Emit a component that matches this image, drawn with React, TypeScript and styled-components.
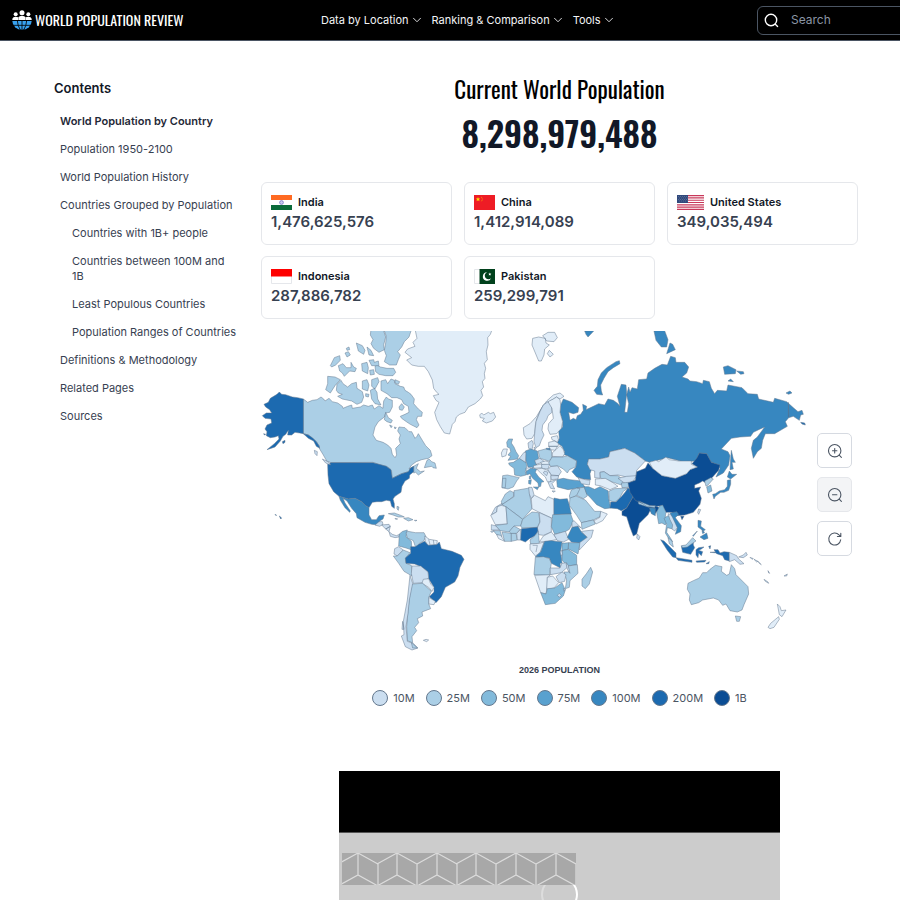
import React from "react";
import styled, { createGlobalStyle } from "styled-components";
import { ChevronDown } from "lucide-react";

const condensed = `"Oswald", "Liberation Sans Narrow", "Roboto Condensed", "Open Sans Condensed", "Liberation Sans", sans-serif`;

const GlobalStyle = createGlobalStyle`
  *, *::before, *::after { box-sizing: border-box; }
  body {
    margin: 0;
    background: #fff;
    color: #111827;
    font-family: Inter, "Liberation Sans", sans-serif;
    font-size: 11px;
    overflow-x: hidden;
  }
  h1, h2, p, ul, ol, figure { margin: 0; padding: 0; }
  ul, ol { list-style: none; }
  a { color: inherit; text-decoration: none; }
  button { font: inherit; cursor: pointer; }
`;

const Header = styled.header`
  display: grid;
  grid-template-columns: 309px 1fr 143px;
  align-items: center;
  height: 41px;
  padding-left: 12px;
  background: #000;
  border-bottom: 1px solid #4b5563;
  overflow: hidden;
`;

const Brand = styled.a`
  display: flex;
  align-items: center;
  gap: 3px;
  color: #fff;
  font: 400 14px/20px ${condensed};
  white-space: nowrap;
`;

const Nav = styled.nav`
  display: flex;
  gap: 8px;
`;

const NavButton = styled.button`
  display: flex;
  align-items: center;
  gap: 1px;
  padding: 0;
  border: 0;
  background: none;
  color: #f3f4f6;
  font-size: 11px;
  font-weight: 400;
  line-height: 16px;
  white-space: nowrap;
`;

const SearchBox = styled.label`
  display: flex;
  align-items: center;
  gap: 12px;
  width: 176px;
  height: 29px;
  padding-left: 6px;
  border: 1px solid #4b5563;
  border-radius: 6px;
`;

const SearchInput = styled.input`
  flex: 1;
  min-width: 0;
  padding: 0;
  border: 0;
  outline: 0;
  background: none;
  color: #fff;
  font: 400 12px/16px Inter, sans-serif;
  &::placeholder { color: #8b95a5; opacity: 1; }
`;

const Page = styled.div`
  display: grid;
  grid-template-columns: 184px minmax(0, 1fr);
  gap: 23px;
  padding: 37px 42px 0 54px;
`;

const Contents = styled.nav`
  padding-top: 1px;
`;

const ContentsTitle = styled.h2`
  margin-bottom: 17px;
  font-size: 13px;
  font-weight: 600;
  line-height: 18px;
`;

const ContentsList = styled.ul<{ $nested?: boolean }>`
  display: grid;
  gap: 13px;
  margin-top: ${(p) => (p.$nested ? "13px" : "0")};
  padding-left: ${(p) => (p.$nested ? "12px" : "6px")};
  line-height: 15px;
  color: #374151;
`;

const ContentsLink = styled.a<{ $active?: boolean }>`
  display: block;
  font-weight: ${(p) => (p.$active ? 600 : 400)};
  color: ${(p) => (p.$active ? "#1f2937" : "#374151")};
`;

const Main = styled.main`
  min-width: 0;
`;

const Title = styled.h1`
  color: #000;
  font: 400 23px/22px ${condensed};
  text-align: center;
`;

const Total = styled.p`
  margin-top: 8px;
  color: #111827;
  font: 600 34px/50px ${condensed};
  text-align: center;
`;

const Cards = styled.ul`
  display: grid;
  grid-template-columns: repeat(3, 1fr);
  gap: 11px 12px;
  margin-top: 24px;
`;

const Card = styled.li`
  height: 63px;
  padding: 11px 9px;
  border: 1px solid #e5e7eb;
  border-radius: 6px;
`;

const CardName = styled.a`
  display: flex;
  align-items: center;
  gap: 6px;
  height: 16px;
  font-weight: 600;
  svg { display: block; }
`;

const CardValue = styled.p`
  margin-top: 2px;
  color: #374151;
  font-size: 15px;
  font-weight: 600;
  line-height: 20px;
`;

const MapFrame = styled.figure`
  position: relative;
  margin-top: 12px;
`;

const MapSvg = styled.svg`
  display: block;
  width: 100%;
  height: auto;
  overflow: hidden;
  path {
    stroke: #64788e;
    stroke-width: 1.5;
    stroke-linejoin: round;
  }
`;

const MapControls = styled.div`
  position: absolute;
  top: 102px;
  right: 6px;
  display: grid;
  gap: 9px;
`;

const MapButton = styled.button`
  display: grid;
  place-items: center;
  width: 35px;
  height: 35px;
  padding: 0;
  border: 1px solid #d6dae1;
  border-radius: 5px;
  background: #fff;
  color: #4b5563;
  &:disabled { background: #f3f4f6; border-color: #e5e7eb; }
`;

const LegendTitle = styled.p`
  margin-top: 12px;
  color: #374151;
  font: 700 9px/14px "Liberation Sans", sans-serif;
  text-align: center;
`;

const Legend = styled.ul`
  display: flex;
  justify-content: center;
  gap: 11px;
  margin-top: 13px;
  color: #4b5563;
  line-height: 16px;
`;

const LegendItem = styled.li`
  display: flex;
  align-items: center;
  gap: 5px;
`;

const Swatch = styled.span<{ $color: string }>`
  width: 16px;
  height: 16px;
  border: 1px solid #64788e;
  border-radius: 50%;
  background: ${(p) => p.$color};
`;

const Player = styled.section`
  width: 74%;
  height: 129px;
  margin: 65px auto 0;
  background: #ccc;
  overflow: hidden;
`;

const PlayerBar = styled.div`
  height: 62px;
  background: #000;
  border-bottom: 1px solid #555;
`;

const PlayerBody = styled.div`
  position: relative;
  padding: 20px 3px 0;
  svg { display: block; }
`;

const Spinner = styled.div`
  position: absolute;
  top: 43px;
  left: 202px;
  width: 37px;
  height: 37px;
  border: 2px solid #ddd;
  border-right-color: #fff;
  border-radius: 50%;
  z-index: 0;
`;

const Pattern = styled.svg`
  position: relative;
  z-index: 1;
`;

const scale = ["#e1edf8", "#cbdef0", "#abcfe6", "#82badb", "#59a1cf", "#3787c0", "#1c6ab0", "#0b4d94"];

type Shape = [number, string];
type Region = { x: number; y: number; shapes: Shape[] };

const northAmerica: Region = {
  x: -6,
  y: -6,
  shapes: [
    [0, "M480,12 712,12 706,28 698,38 699,60 694,80 697,104 688,115 692,130 688,146 690,160 682,170 686,186 678,196 683,212 676,222 660,236 640,246 630,262 614,268 604,276 600,290 592,298 584,327 568,324 556,305 545,284 539,262 552,232 543,226 535,212 552,208 545,202 536,190 532,165 520,140 508,124 490,124 470,120 455,105 470,98 450,82 458,72 480,64 474,52 486,40z"],
    [0, "M674,270 680,264 686,270 700,262 706,266 716,262 722,276 712,288 694,294 682,288 688,280 676,278z"],
    [2, "M145,222 158,232 172,226 186,224 198,216 206,222 210,228 222,220 232,230 248,234 262,244 264,250 278,244 290,240 292,250 316,246 326,240 340,244 352,240 358,252 372,242 384,250 386,228 394,216 400,222 412,226 412,246 404,262 392,264 388,276 370,290 360,306 354,330 364,346 384,352 398,360 408,370 412,388 420,398 425,390 422,370 436,356 432,342 436,330 428,318 432,306 450,308 462,320 470,320 480,340 486,334 490,326 502,346 512,362 526,376 531,392 520,400 500,404 484,410 470,420 462,432 476,424 490,416 484,430 496,440 508,438 490,450 482,442 476,444 476,426 468,428 462,440 440,446 410,460 410,440 404,430 394,424 370,418 354,412 228,413 215,408 205,390 194,372 192,362 184,350 160,330 145,326z"],
    [6, "M145,222 128,218 112,216 92,209 80,208 73,201 66,208 46,220 40,232 27,238 32,246 44,254 50,264 34,264 22,272 30,280 48,282 50,294 36,300 30,312 36,320 34,332 46,338 60,336 70,332 72,342 58,356 36,374 60,366 76,348 84,334 92,328 100,316 98,330 110,330 120,322 134,324 145,326 160,330 172,338 184,350 192,362 194,370 184,364 176,348 160,340 145,326z"],
    [6, "M82,350 90,346 90,352 84,356z M26,326 32,328 28,330z M60,568 65,571 62,571z M73,573 80,579 77,582z"],
    [6, "M228,413 354,413 372,418 394,424 408,434 412,460 440,446 460,440 466,430 476,424 476,440 464,450 463,460 450,468 441,484 440,490 438,502 420,514 414,522 418,536 418,550 410,544 406,528 394,526 380,530 366,530 352,532 342,548 332,542 320,530 300,520 280,522 252,514 236,500 222,476 219,450 218,418z"],
    [5, "M252,514 280,522 300,520 320,530 332,542 342,548 342,570 350,584 364,584 372,572 388,570 384,582 374,588 368,600 350,598 330,592 306,578 304,566 290,550 276,528 264,520 270,534 286,558 284,562 270,548 256,526z"],
    [1, "M360,600 372,590 382,590 384,598 374,604z M380,600 402,598 406,604 392,612z M392,612 406,604 402,620z M402,620 412,628 424,632 434,628 432,636 420,638 406,634z"],
    [2, "M400,566 418,564 440,572 448,576 430,576 414,570z M446,580 460,578 474,584 460,588z M478,586 486,586 482,588z M420,580 428,582 422,583z M426,544 432,546 430,556 426,552z"],
    [2, "M508,428 516,406 522,402 530,410 540,414 544,430 534,428 530,424z"],
    [1, "M202,402 222,412 227,420 212,414z M178,376 187,380 186,392 180,386z"],
    [2, "M246,178 258,166 264,176 278,186 290,176 304,172 306,190 322,200 326,216 320,232 306,238 290,228 262,222 248,214 262,208 250,204 244,196z"],
    [2, "M218,154 240,156 256,164 240,182 226,204 212,194 218,176z"],
    [2, "M378,168 392,164 398,176 408,162 418,166 420,176 436,184 446,186 450,196 460,202 468,208 478,222 476,236 490,252 502,262 500,274 488,274 484,284 492,300 486,308 466,298 454,290 440,280 436,274 450,268 462,262 460,244 446,236 440,224 426,218 410,218 396,206 378,196z"],
    [2, "M392,262 400,278 412,286 408,294 396,290 388,284z M404,300 412,304 408,308z M418,306 424,308 420,312z M432,246 440,236 448,246 442,256 434,254z"],
    [2, "M386,12 470,12 462,36 448,50 440,66 428,80 436,90 430,104 424,120 404,120 388,110 394,92 388,76 392,54 394,34z"],
    [2, "M348,12 384,12 392,36 386,60 388,74 372,82 356,70 348,56 354,44 346,30z"],
    [2, "M360,124 366,120 376,126 396,130 416,130 422,142 414,152 392,152 372,148 362,140z"],
    [2, "M250,122 264,116 274,128 288,128 288,112 296,126 304,130 300,140 284,138 268,154 262,144 254,138z"],
    [2, "M226,122 238,98 254,92 256,106 242,120 230,126z M304,54 322,62 330,76 326,88 310,78z M336,66 348,76 356,92 342,90z M270,84 280,80 286,90 276,96z M274,70 282,66 284,74 276,76z"],
    [2, "M320,116 336,112 340,128 338,146 322,138z M342,106 356,104 358,112 370,108 372,122 350,122z M344,136 356,134 358,148 346,150z M420,164 434,170 430,178 420,174z"],
    [2, "M322,168 336,164 342,180 338,198 322,192z M350,164 368,158 372,170 360,192 350,184z M346,196 358,190 366,202 368,222 378,240 360,236 350,222z M332,206 342,208 340,216 332,214z"],
  ],
};

const eurasia: Region = {
  x: 219,
  y: -6,
  shapes: [
    [0, "M158,40 176,36 196,40 198,54 208,60 194,72 192,90 184,108 176,108 166,84 156,60z M188,32 204,22 224,22 232,38 222,50 200,48z M202,86 208,76 220,88 210,96z"],
    [5, "M314,18 342,17 332,28 324,36 318,28z"],
    [5, "M408,110 418,107 420,116 400,128 384,140 372,160 362,180 364,198 368,210 350,208 342,196 352,184 354,164 364,144 380,128z"],
    [5, "M250,222 276,232 296,248 294,262 280,266 266,262 270,286 280,280 288,284 292,272 302,268 310,256 308,238 320,244 318,254 340,244 356,236 374,240 384,222 400,226 414,236 420,244 412,214 424,178 438,180 440,206 434,262 442,262 446,236 440,210 446,186 450,202 456,188 472,192 476,164 500,162 504,144 524,130 546,118 562,120 572,94 586,98 588,112 614,112 626,126 620,144 606,156 624,162 630,168 650,170 668,176 670,166 688,170 694,190 704,206 712,196 740,198 744,180 786,188 804,206 832,208 836,222 880,232 884,220 920,230 942,250 954,260 966,256 970,268 962,270 958,286 940,274 926,278 916,290 922,304 884,326 856,326 848,346 844,370 832,380 820,400 814,370 820,346 832,336 854,306 836,314 820,322 812,334 780,336 754,340 724,372 744,380 750,392 746,420 730,444 708,456 720,430 714,420 692,410 680,386 658,384 648,408 610,410 562,398 540,404 508,412 496,408 464,384 434,370 390,380 386,396 360,402 326,402 322,418 334,434 330,446 332,464 310,462 290,456 276,440 288,426 290,408 262,392 250,388 254,380 246,364 232,354 238,340 236,318 248,306 248,290 240,262 242,240z"],
    [5, "M754,376 760,402 766,412 756,412 760,432 750,434 752,400z M522,18 552,12 564,44 560,66 544,66 528,46z M560,86 570,54 578,58 586,74z M730,126 744,122 768,134 766,146 734,148z M770,138 790,140 792,146 782,148z M744,168 752,162 760,170z M918,204 930,198 936,204 926,208z"],
    [6, "M962,292 974,294 976,300 966,297z M925,232 927,276 925,276z"],
    [0, "M130,308 150,296 170,274 184,250 200,228 220,210 240,204 252,214 240,222 230,216 220,222 204,232 190,240 180,260 170,282 166,300 164,326 156,340 140,342 132,330z"],
    [1, "M190,240 204,230 214,242 216,262 204,272 200,284 188,300 186,316 192,330 184,346 178,362 168,368 162,350 164,326 168,290 180,260z"],
    [0, "M204,230 220,222 230,216 240,224 242,240 240,262 248,290 244,310 230,326 210,328 204,312 206,296 220,280 216,250z"],
    [1, "M144,354 156,346 160,356 156,374 146,370z M162,366 168,370 164,376z"],
    [0, "M214,336 232,332 236,346 230,350 216,344z M206,352 224,348 236,356 234,364 206,364z M206,364 232,364 226,376 212,374z"],
    [5, "M198,370 210,370 210,376 200,376z"],
    [0, "M228,374 240,362 250,374 254,386 248,396 216,394 218,382z"],
    [3, "M80,352 86,342 98,342 94,354 102,366 108,380 116,392 112,402 84,406 92,394 84,390 92,380 90,370 82,366z"],
    [0, "M64,384 70,372 82,372 78,392 66,396z"],
    [3, "M86,414 100,412 118,400 138,412 140,424 136,440 138,450 122,454 104,450 102,430 88,420z"],
    [2, "M68,452 82,450 118,458 110,468 100,486 84,492 66,488z"],
    [2, "M68,460 78,460 76,488 66,488z"],
    [4, "M136,378 152,372 172,378 176,400 166,408 170,420 160,428 144,426 138,408z"],
    [1, "M118,400 132,382 138,382 136,412z"],
    [0, "M138,430 156,426 160,434 140,440z M160,422 188,416 186,428 162,430z"],
    [4, "M138,440 152,430 170,432 166,442 176,456 192,470 184,472 182,484 176,486 174,474 158,460 150,446 140,450z M160,486 176,486 172,494z M146,466 154,464 152,478 146,476z M148,454 152,452 152,462 148,462z"],
    [2, "M174,378 196,372 214,376 216,400 206,408 180,400z"],
    [1, "M164,406 180,400 194,410 168,418z M184,418 210,416 204,432 186,430z"],
    [0, "M182,412 196,408 212,412 208,418 186,418z M170,432 186,430 204,436 214,450 212,472 202,470 196,456 184,446z"],
    [1, "M204,434 212,424 232,422 244,440 236,452 214,450z M212,452 236,452 234,462 214,464z M204,472 228,464 216,476 224,492 212,490z M216,498 226,498 222,502z M194,438 204,442 200,452 190,444z"],
    [2, "M216,396 248,396 262,392 290,408 286,426 268,434 262,444 250,432 232,422 212,424 206,414z"],
    [4, "M230,464 250,460 270,464 304,468 314,486 290,490 264,494 232,486z"],
    [1, "M294,458 316,464 330,466 328,480 304,476z"],
    [1, "M322,418 326,402 360,402 386,396 390,380 434,370 464,384 496,408 470,436 468,454 440,456 414,450 390,452 372,440 360,442 360,460 344,458 344,438 330,434z"],
    [2, "M360,442 372,440 390,452 414,452 432,466 424,480 400,472 376,462 362,460z"],
    [0, "M346,462 376,460 400,474 414,484 390,494 360,482 346,480z"],
    [1, "M414,460 440,454 470,452 460,468 436,476z"],
    [2, "M424,474 446,472 454,486 426,488z"],
  ],
};

const africaAndMiddleEast: Region = {
  x: 219,
  y: 149,
  shapes: [
    [2, "M64,64 76,42 90,32 102,38 100,50 84,62 66,74z"],
    [1, "M34,104 46,82 66,70 64,78 52,80 50,96z"],
    [2, "M66,74 84,62 102,50 102,32 148,24 150,48 156,86 128,118 110,104 76,80z"],
    [1, "M146,22 156,22 162,44 154,56 148,42z"],
    [0, "M32,106 50,96 52,80 64,76 78,80 82,132 46,134z"],
    [2, "M82,132 78,80 128,118 122,138 102,138 88,156 60,152 46,136z"],
    [2, "M122,138 128,118 156,96 176,98 180,126 172,142 126,144z"],
    [0, "M154,56 164,46 196,62 204,50 222,58 222,110 214,114 176,96 156,86z"],
    [5, "M222,54 240,58 262,56 268,76 274,102 222,104z"],
    [1, "M178,98 214,114 214,156 190,166 176,164 172,144 180,126z"],
    [3, "M218,104 272,102 280,124 268,148 254,156 224,162 214,140z"],
    [1, "M34,134 48,138 58,150 34,150z M32,154 42,152 36,158z"],
    [2, "M40,152 60,152 66,170 50,164z"],
    [0, "M50,164 62,166 74,184 56,176z"],
    [2, "M66,156 94,160 94,184 74,184z"],
    [2, "M94,160 108,160 112,180 94,184z"],
    [2, "M88,154 102,138 120,148 110,160 92,160z"],
    [1, "M110,160 122,148 124,180 112,180z"],
    [6, "M124,146 172,142 174,154 164,168 148,176 136,186 122,180z"],
    [2, "M152,192 150,180 166,166 174,154 176,166 178,190z"],
    [0, "M178,186 190,168 214,156 232,178 204,184z"],
    [1, "M222,164 256,154 266,178 250,186 232,182z"],
    [5, "M262,172 276,142 294,138 304,156 322,172 300,190 274,186z"],
    [1, "M276,126 282,122 304,144 294,138 276,142z"],
    [1, "M304,154 340,150 334,172 298,210 296,190 322,172z"],
    [3, "M266,188 300,188 294,222 264,206z"],
    [3, "M246,190 266,188 264,208 246,212z"],
    [0, "M150,192 178,190 192,186 180,218 166,228 150,208z M158,196 172,196 168,216"],
    [5, "M194,184 214,182 246,186 242,212 246,250 240,250 242,264 214,250 208,234 190,232 166,230 182,216z"],
    [3, "M246,212 264,208 290,226 290,254 262,258 246,240z"],
    [1, "M240,214 246,212 248,224 242,226z"],
    [2, "M166,232 190,230 208,236 214,250 208,286 162,284z"],
    [1, "M210,264 240,264 246,250 260,248 262,262 244,278 212,284z"],
    [2, "M264,258 292,254 294,280 270,302 268,322 256,326 260,300 252,276 266,276z"],
    [1, "M258,250 264,254 270,280 262,268z"],
    [1, "M228,290 246,276 258,284 254,304 238,308z"],
    [0, "M164,286 212,284 202,292 202,318 198,342 182,338z"],
    [0, "M202,292 218,288 236,308 222,324 200,328z"],
    [3, "M182,338 198,342 202,326 224,324 246,308 256,330 250,348 226,370 196,374z"],
    [1, "M232,346 238,340 244,346 238,352z M250,326 256,328 252,334z"],
    [2, "M306,298 320,280 332,262 338,276 328,312 316,326 306,318z"],
    [2, "M274,30 290,24 314,22 322,48 310,56 290,46 270,56 268,48z M290,24 300,26 290,46"],
    [2, "M270,54 288,48 316,60 336,84 344,94 362,94 360,110 340,120 304,128 290,106 268,76z"],
    [2, "M304,128 340,120 346,132 306,148z"],
    [0, "M342,122 360,112 362,94 382,102 368,122 348,132z"],
    [4, "M312,20 326,20 344,28 360,20 384,32 386,56 392,84 374,86 350,74 332,54 320,42z"],
    [2, "M386,34 404,26 444,24 430,34 418,56 404,66 388,62z"],
    [6, "M390,84 392,66 408,66 424,50 436,36 444,24 464,38 456,56 440,84 424,92 412,86z"],
    [7, "M426,94 440,84 456,56 466,36 480,64 510,80 528,78 540,84 522,104 510,92 504,104 478,130 470,162 460,168 450,142 440,110 426,106z"],
    [1, "M472,162 480,170 476,180 470,174z"],
    [2, "M474,62 508,76 506,82 476,72z"],
  ],
};

const eastAsia: Region = {
  x: 379,
  y: -6,
  shapes: [
    [7, "M-36,474 -14,466 -10,440 16,430 24,414 38,430 66,452 106,460 140,446 150,434 172,426 156,416 170,400 178,384 200,386 214,412 240,420 236,436 216,458 194,472 188,468 178,474 164,480 164,490 182,486 176,498 184,520 180,538 160,562 134,570 110,572 94,562 78,562 66,542 48,544 30,542 4,534 -14,526 -30,502z M122,574 132,574 126,584z"],
    [0, "M28,412 48,406 56,410 78,396 88,404 116,408 154,408 154,418 172,426 150,434 140,446 106,460 66,452 38,430z"],
    [2, "M-4,528 30,542 46,542 44,548 20,544z"],
    [5, "M28,548 46,550 46,572 34,566z"],
    [1, "M176,552 182,554 176,568 173,562z"],
    [3, "M50,562 58,544 68,540 78,562 76,574 82,590 76,600 66,594 56,596z"],
    [3, "M72,580 84,572 94,578 104,596 98,612 82,608 80,622 92,640 98,650 88,644 76,624 80,598z"],
    [1, "M84,566 94,570 104,580 116,604 104,618 96,612 98,600 90,584z"],
    [5, "M90,564 110,560 116,568 106,578 124,602 122,620 106,628 112,608 98,578z"],
    [2, "M84,638 96,648 100,666 88,656z"],
    [6, "M62,644 72,648 108,684 108,698 98,696 82,676z M108,698 132,702 156,706 156,712 114,706z"],
    [6, "M124,664 140,662 160,650 160,660 164,668 152,688 128,682z"],
    [2, "M124,662 138,660 158,638 168,648 156,656 142,666 128,668z"],
    [6, "M168,674 176,668 192,666 184,672 176,676 188,680 184,692 176,684 174,698 168,690z M168,708 198,706 194,711 170,712z M198,716 208,710 206,716z M206,664 212,662 210,672z M210,682 236,680 234,684z"],
    [5, "M174,586 184,588 182,604 196,614 190,618 174,606z M186,616 194,622 188,626z M180,636 200,624 204,640 192,644z M158,632 172,618 160,634z"],
    [6, "M222,674 234,674 240,684 252,680 268,682 268,708 254,704 248,692 230,686z"],
    [1, "M268,682 290,692 296,702 312,716 300,718 284,704 268,710z M296,696 310,690 318,682 322,690 310,698z"],
    [2, "M194,468 212,458 220,462 204,480 198,484z"],
    [3, "M200,486 212,480 216,498 204,504z"],
    [5, "M218,508 226,506 238,498 254,494 262,484 262,466 272,464 272,478 266,496 252,502 242,502 226,514 222,522z M262,456 268,438 276,448 290,448 272,462z"],
  ],
};

const southAmerica: Region = {
  x: 99,
  y: 169,
  shapes: [
    [3, "M118,102 128,94 142,90 138,110 154,124 156,150 138,144 116,138z"],
    [2, "M138,98 144,94 166,98 192,98 198,110 190,124 178,130 174,138 166,140 160,122 142,114z"],
    [0, "M194,108 208,118 232,122 230,134 204,136 196,124z M206,118 210,134 M220,120 222,134"],
    [1, "M104,146 116,140 130,150 118,162 112,168 102,162z"],
    [2, "M100,168 112,168 130,150 150,158 136,176 138,190 154,196 156,228 132,214 116,190z"],
    [6, "M152,140 166,140 178,132 194,124 204,136 230,134 238,126 244,146 276,154 304,166 312,178 300,202 294,228 284,246 256,262 244,290 228,308 208,290 222,276 222,262 206,236 204,216 184,200 164,192 138,190 136,174 152,160z"],
    [1, "M156,198 182,198 204,216 206,234 188,248 160,250 154,220z"],
    [0, "M186,250 190,238 206,236 212,252 222,262 216,274 206,262z"],
    [0, "M206,292 226,304 222,314 206,312z"],
    [2, "M156,252 188,250 214,274 206,292 206,312 212,326 186,336 188,348 172,356 176,368 164,382 170,392 156,410 158,428 142,422 140,380 144,330 150,280z"],
    [1, "M150,226 158,250 148,300 144,340 138,380 142,424 160,430 174,444 156,450 136,440 124,408 132,404 130,364 142,300z M128,364 132,388 126,388z"],
    [2, "M154,428 172,444 158,444z"],
    [0, "M190,421 198,418 206,420 200,425z"],
  ],
};

const oceania: Region = {
  x: 389,
  y: 159,
  shapes: [
    [2, "M114,280 130,272 148,264 158,248 170,248 180,238 196,226 216,230 214,244 230,256 238,252 244,224 254,236 258,254 278,274 294,290 296,312 282,344 276,360 262,366 240,362 228,342 218,346 206,330 190,324 158,330 146,338 124,344 118,330 120,312 112,298z"],
    [2, "M256,378 272,380 268,394 260,394z"],
    [0, "M382,342 390,350 394,362 408,360 396,380 388,374z M354,412 362,400 386,380 388,388 372,412 360,416z"],
    [1, "M342,268 354,276 356,280 346,274z M354,242 359,250 356,249z M402,258 412,252 410,258z M300,202 310,206 306,208z M312,208 324,214 320,216z M324,214 334,224 328,220z"],
  ],
};

const regions = [northAmerica, southAmerica, eurasia, africaAndMiddleEast, eastAsia, oceania];

function WorldMap() {
  return (
    <MapSvg viewBox="0 0 597 320" role="img" aria-label="World population by country">
      {regions.map((region, i) => (
        <g key={i} transform={`translate(${region.x} ${region.y}) scale(0.33333)`}>
          {region.shapes.map(([level, d], j) => (
            <path key={j} d={d} fill={scale[level]} />
          ))}
        </g>
      ))}
    </MapSvg>
  );
}

function Logo() {
  return (
    <svg width="20" height="20" viewBox="0 0 60 60" aria-hidden="true">
      <g fill="#fff">
        <circle cx="11" cy="13" r="6" />
        <circle cx="49" cy="13" r="6" />
        <circle cx="30" cy="8" r="7.5" />
        <path d="M1 30v-4q2-6 10-6 5 0 7 2v8zM59 30v-4q-2-6-10-6-5 0-7 2v8zM19 30v-8q3-5 11-5t11 5v8z" />
      </g>
      <path fill="#38a1ee" d="M1 33h58a29 26 0 0 1-58 0z" />
      <path fill="none" stroke="#000" strokeWidth="2.5" d="M3 46h54M30 32v28M16 32q1 16 9 28M44 32q-1 16-9 28" />
    </svg>
  );
}

function SearchIcon() {
  return (
    <svg width="15" height="15" viewBox="0 0 15 15" fill="none" stroke="#fff" strokeWidth="1.4" strokeLinecap="round" aria-hidden="true">
      <circle cx="7" cy="7" r="5.7" />
      <path d="M11.3 11.3 13.6 13.4" />
    </svg>
  );
}

function ControlIcon({ kind }: { kind: "in" | "out" | "reset" }) {
  return (
    <svg width="16" height="16" viewBox="0 0 16 16" fill="none" stroke="currentColor" strokeWidth="1.1" strokeLinecap="round" strokeLinejoin="round" aria-hidden="true">
      {kind === "reset" ? (
        <path d="M13.7 8.8A6 6 0 1 1 12 3.8L13.6 5.3M13.8 2.2V5.5H10.4" />
      ) : (
        <>
          <circle cx="7.7" cy="7.7" r="6.2" />
          <path d="M12.2 12.2 14.4 14.4M5.5 7.7h4.4" />
          {kind === "in" && <path d="M7.7 5.5v4.4" />}
        </>
      )}
    </svg>
  );
}

function Flag({ code }: { code: string }) {
  const wide = code === "us";
  const w = wide ? 27 : 21;
  return (
    <svg width={w} height="15" viewBox={`0 0 ${w} 15`} aria-hidden="true">
      {code === "in" && (
        <>
          <path fill="#fff" d="M0 0h21v15H0z" />
          <path fill="#ff6a22" d="M0 0h21v5H0z" />
          <path fill="#0b6b3a" d="M0 10h21v5H0z" />
          <circle cx="10.5" cy="7.5" r="1.9" fill="#c9c9ee" stroke="#5b5bb8" strokeWidth=".6" />
        </>
      )}
      {code === "cn" && (
        <>
          <path fill="#ee1c25" d="M0 0h21v15H0z" />
          <path fill="#ffde00" d="m4 2 .6 1.6h1.7L5 4.6l.5 1.7L4 5.3l-1.4 1L3 4.6 1.8 3.6h1.6z" />
          <path stroke="#ffb000" strokeWidth=".9" strokeDasharray="1 1" fill="none" d="M7 1.8q2.6 2.2 0 5" />
        </>
      )}
      {code === "us" && (
        <>
          <path fill="#fff" d="M0 0h27v15H0z" />
          <path stroke="#c8385a" strokeWidth="1.15" d="M0 .6h27M0 2.9h27M0 5.2h27M0 7.5h27M0 9.8h27M0 12.1h27M0 14.4h27" />
          <path fill="#30497c" d="M0 0h11v8H0z" />
          <path stroke="#8b9abb" strokeWidth=".6" strokeDasharray=".7 1.3" d="M1 1.5h10M2 3h9M1 4.5h10M2 6h9" />
        </>
      )}
      {code === "id" && (
        <>
          <path fill="#fff" stroke="#e5e7eb" d="M.5.5h20v14H.5z" />
          <path fill="#fe0000" d="M0 0h21v7.5H0z" />
        </>
      )}
      {code === "pk" && (
        <>
          <path fill="#fff" stroke="#e5e7eb" d="M.5.5h20v14H.5z" />
          <path fill="#01411c" d="M5.5 0H21v15H5.5z" />
          <path fill="#fff" d="M13 3.2a4.3 4.3 0 1 0 4.1 6 3.7 3.7 0 1 1-4.1-6z" />
          <path fill="#fff" d="m15.8 3.6.4 1 1.1.1-.8.7.2 1.1-.9-.6-1 .6.3-1.1-.8-.7h1.1z" />
        </>
      )}
    </svg>
  );
}

const countries = [
  { code: "in", name: "India", value: "1,476,625,576" },
  { code: "cn", name: "China", value: "1,412,914,089" },
  { code: "us", name: "United States", value: "349,035,494" },
  { code: "id", name: "Indonesia", value: "287,886,782" },
  { code: "pk", name: "Pakistan", value: "259,299,791" },
];

const groups = [
  "Countries with 1B+ people",
  "Countries between 100M and 1B",
  "Least Populous Countries",
  "Population Ranges of Countries",
];

const legend = ["10M", "25M", "50M", "75M", "100M", "200M", "1B"];

export default function App() {
  return (
    <>
      <GlobalStyle />
      <Header>
        <Brand href="#">
          <Logo />
          WORLD POPULATION REVIEW
        </Brand>
        <Nav aria-label="Main">
          {["Data by Location", "Ranking & Comparison", "Tools"].map((label) => (
            <NavButton key={label} type="button">
              {label}
              <ChevronDown size={14} strokeWidth={1.5} />
            </NavButton>
          ))}
        </Nav>
        <SearchBox>
          <SearchIcon />
          <SearchInput type="search" placeholder="Search" aria-label="Search" />
        </SearchBox>
      </Header>
      <Page>
        <Contents aria-label="Contents">
          <ContentsTitle>Contents</ContentsTitle>
          <ContentsList>
            <li><ContentsLink href="#country" $active>World Population by Country</ContentsLink></li>
            <li><ContentsLink href="#years">Population 1950-2100</ContentsLink></li>
            <li><ContentsLink href="#history">World Population History</ContentsLink></li>
            <li>
              <ContentsLink href="#groups">Countries Grouped by Population</ContentsLink>
              <ContentsList $nested>
                {groups.map((label) => (
                  <li key={label}><ContentsLink href="#groups">{label}</ContentsLink></li>
                ))}
              </ContentsList>
            </li>
            <li><ContentsLink href="#definitions">Definitions &amp; Methodology</ContentsLink></li>
            <li><ContentsLink href="#related">Related Pages</ContentsLink></li>
            <li><ContentsLink href="#sources">Sources</ContentsLink></li>
          </ContentsList>
        </Contents>
        <Main>
          <Title>Current World Population</Title>
          <Total>8,298,979,488</Total>
          <Cards>
            {countries.map((c) => (
              <Card key={c.code}>
                <CardName href={`#${c.code}`}>
                  <Flag code={c.code} />
                  {c.name}
                </CardName>
                <CardValue>{c.value}</CardValue>
              </Card>
            ))}
          </Cards>
          <MapFrame>
            <WorldMap />
            <MapControls>
              <MapButton type="button" aria-label="Zoom in"><ControlIcon kind="in" /></MapButton>
              <MapButton type="button" aria-label="Zoom out" disabled><ControlIcon kind="out" /></MapButton>
              <MapButton type="button" aria-label="Reset map"><ControlIcon kind="reset" /></MapButton>
            </MapControls>
          </MapFrame>
          <LegendTitle>2026 POPULATION</LegendTitle>
          <Legend>
            {legend.map((label, i) => (
              <LegendItem key={label}>
                <Swatch $color={scale[i + 1]} />
                {label}
              </LegendItem>
            ))}
          </Legend>
          <Player aria-label="Video player">
            <PlayerBar />
            <PlayerBody>
              <Pattern width="234" height="32" viewBox="0 0 234 32" aria-hidden="true">
                <path fill="#a8a8a8" d="M0 0h234v32H0z" />
                <g fill="none" stroke="#dcdcdc" strokeWidth="1.2">
                  {[-24, 16, 55, 95, 134, 174, 214].map((x) => (
                    <path key={x} d={`M${x - 20} 11 ${x} 0 ${x + 20} 11V32M${x} 0V22M${x - 20} 33 ${x} 22 ${x + 20} 33`} />
                  ))}
                </g>
              </Pattern>
              <Spinner />
            </PlayerBody>
          </Player>
        </Main>
      </Page>
    </>
  );
}
